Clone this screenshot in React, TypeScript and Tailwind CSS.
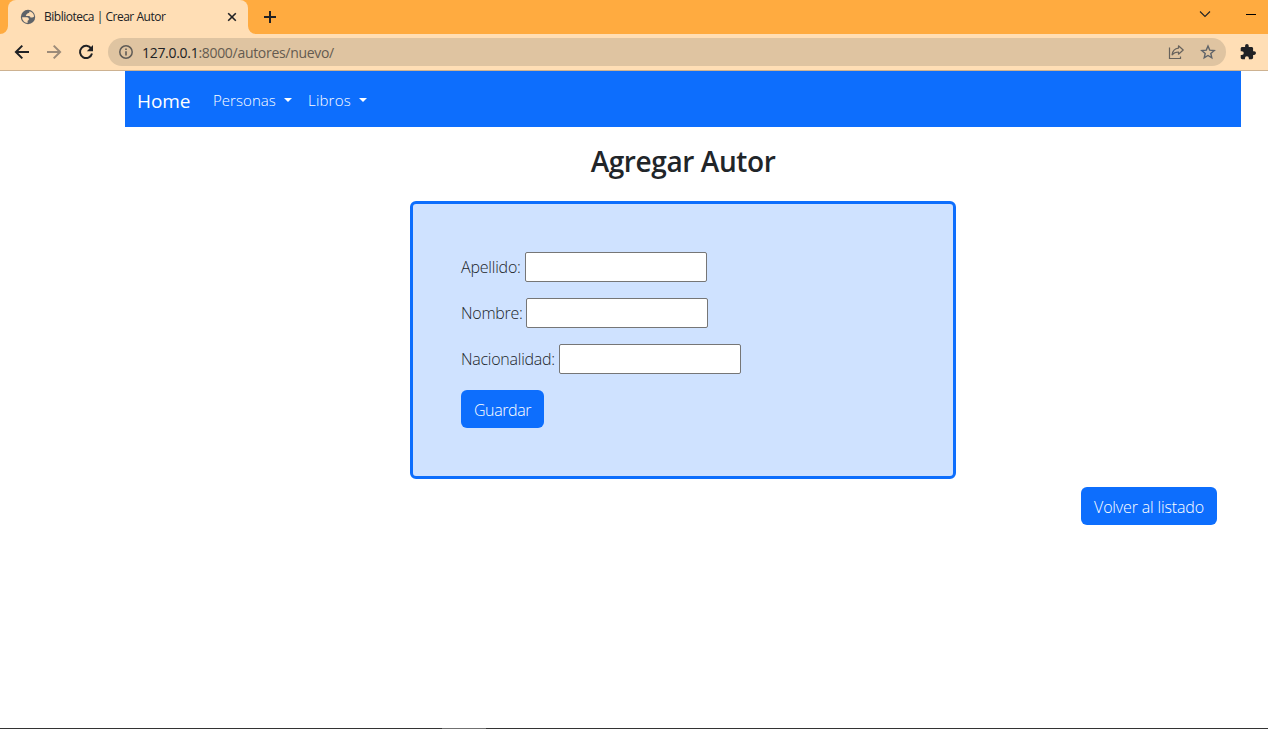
import type { ReactNode } from "react";

function TabStrip() {
  return (
    <div className="flex h-[34px] bg-[#ffab40] pl-2 text-[#202124]">
      <div className="relative flex h-full w-60 items-center rounded-t-lg bg-[#ffdeb5] pl-3 pr-[11px]">
        <svg className="absolute -left-2 bottom-0 size-2" viewBox="0 0 8 8" fill="#ffdeb5">
          <path d="M8 0v8H0a8 8 0 0 0 8-8z" />
        </svg>
        <svg className="absolute -right-2 bottom-0 size-2" viewBox="0 0 8 8" fill="#ffdeb5">
          <path d="M0 0v8h8a8 8 0 0 1-8-8z" />
        </svg>
        <svg className="size-4" viewBox="0 0 16 16">
          <circle cx="8" cy="8" r="7.200" fill="#5f6368" />
          <path
            d="M9.500 2.200c.1 1.300-.5 1.900-1.500 2-1 .1-.8.900-1.500 1.200-.8.300-.9 1.200-.1 1.600h2.500c1 .1 1.500.7 1.500 1.500h1.600c.9 0 1.600-.4 2.100-1.100C13.800 4.800 12 2.700 9.500 2.200zM2.100 8.200c.1 3.100 2.500 5.500 5.500 5.700v-1.700c0-.8.500-1.200 1.200-1.300.3-1.300-.3-2.700-1.800-2.700z"
            fill="#ffdeb5"
          />
        </svg>
        <span className="ml-2 whitespace-nowrap text-[12px] tracking-[-0.48px]">Biblioteca | Crear Autor</span>
        <svg className="ml-auto size-[10px]" viewBox="0 0 10 10" stroke="#202124" strokeWidth="1.600">
          <path d="M1.200 1.200l7.600 7.600M8.800 1.200L1.200 8.800" />
        </svg>
      </div>
      <svg className="ml-4 mt-[11px] size-3" viewBox="0 0 12 12" stroke="#202124" strokeWidth="2">
        <path d="M6 0v12M0 6h12" />
      </svg>
      <svg className="ml-auto mt-[10px] h-2 w-3" viewBox="0 0 12 8" fill="none" stroke="#202124" strokeWidth="1.100">
        <path d="M1 1.500l5 5 5-5" />
      </svg>
      <div className="ml-[35px] mr-3 mt-[14px] h-px w-[10px] bg-black" />
    </div>
  );
}

function Toolbar() {
  return (
    <div className="flex h-[37px] items-center border-b border-[#cdb291] bg-[#ffdeb5] pl-[14px]">
      <svg className="size-4" viewBox="0 0 16 16" fill="none" stroke="#202124" strokeWidth="2">
        <path d="M15 8H2.200M8.300 1.600L1.900 8l6.400 6.400" />
      </svg>
      <svg className="ml-4 size-4" viewBox="0 0 16 16" fill="none" stroke="#9c8b79" strokeWidth="2">
        <path d="M1 8h12.800M7.700 1.600L14.100 8l-6.400 6.400" />
      </svg>
      <svg className="ml-4 size-4" viewBox="0 0 16 16">
        <path d="M13.200 4.600A6.100 6.100 0 1 0 14 9.500" fill="none" stroke="#202124" strokeWidth="2" />
        <path d="M15 1v6.200H8.800z" fill="#202124" />
      </svg>
      <div className="ml-[14px] flex h-7 w-[1118px] items-center rounded-full bg-[#dfc4a1] pl-[11px] pr-[10px]">
        <svg className="size-[14px]" viewBox="0 0 14 14">
          <circle cx="7" cy="7" r="6.200" fill="none" stroke="#5f5b56" strokeWidth="1.500" />
          <path d="M6.200 6.200h1.600v4.300H6.200zM6.200 3.500h1.600v1.600H6.200z" fill="#5f5b56" />
        </svg>
        <span className="ml-[9px] whitespace-nowrap text-[14px] tracking-[-0.3px] text-[#655b50]">
          <span className="text-[#202124]">127.0.0.1</span>:8000/autores/nuevo/
        </span>
        <svg className="ml-auto h-4 w-4" viewBox="0 0 16 16" fill="none" stroke="#67625c" strokeWidth="1.200">
          <path d="M1.500 3.500v11h11v-2" />
          <path d="M10.500 1.800l4.700 4.200-4.700 4.200V8C7.500 8 5.600 8.800 4.100 10.800 4.500 7.400 6.900 4.500 10.500 4.100z" strokeLinejoin="round" />
        </svg>
        <svg className="ml-4 h-4 w-4" viewBox="0 0 16 16" fill="none" stroke="#5f6368" strokeWidth="1.400">
          <path d="M8 2l1.700 4.100 4.500.4-3.400 2.900 1 4.400L8 11.500l-3.800 2.300 1-4.400L1.800 6.500l4.500-.4z" />
        </svg>
      </div>
      <svg className="ml-[14px] size-4" viewBox="1 1 22 22" fill="#202124">
        <path d="M20.500 11H19V7c0-1.100-.9-2-2-2h-4V3.500a2.500 2.500 0 0 0-5 0V5H4c-1.100 0-2 .9-2 2v3.800h1.500a2.700 2.700 0 0 1 0 5.400H2V20c0 1.100.9 2 2 2h3.800v-1.500a2.700 2.700 0 0 1 5.400 0V22H17c1.100 0 2-.9 2-2v-4h1.500a2.500 2.500 0 0 0 0-5z" />
      </svg>
    </div>
  );
}

function MenuItem({ children, className }: { children: ReactNode; className: string }) {
  return (
    <button className={`flex items-center justify-between whitespace-nowrap ${className}`}>
      {children}
      <span className="border-x-[4px] border-t-[4px] border-x-transparent border-t-white" />
    </button>
  );
}

function Field({ label, id, className }: { label: string; id: string; className: string }) {
  return (
    <div className="mb-4 flex h-[30px] items-center">
      <label htmlFor={id} className={`shrink-0 whitespace-nowrap ${className}`}>
        {label}
      </label>
      <input id={id} className="h-[30px] w-[182px] rounded-[2px] border border-[#767676] bg-white px-1" />
    </div>
  );
}

export default function App() {
  return (
    <div className="flex h-[729px] w-[1268px] flex-col overflow-hidden bg-white font-['Open_Sans',sans-serif]">
      <TabStrip />
      <Toolbar />
      <main className="ml-[125px] w-[1116px] grow text-[16px] font-light leading-6 text-[#212529]">
        <nav className="flex h-14 items-center bg-[#0d6efd] pl-3 text-white">
          <a className="w-[76px] pt-1 text-[19px] font-normal tracking-[-0.1px]">Home</a>
          <MenuItem className="w-[79px] pt-0.5 text-[15px] tracking-[0.05px]">Personas</MenuItem>
          <MenuItem className="ml-4 w-[59px] pt-0.5 text-[15px] tracking-[0.2px]">Libros</MenuItem>
        </nav>
        <h1 className="mt-[17px] text-center text-[28px] font-semibold leading-[34px] tracking-[-0.4px]">Agregar Autor</h1>
        <form className="mx-auto mt-[23px] h-[278px] w-[546px] rounded-md border-[3px] border-[#0d6efd] bg-[#cfe2ff] p-12">
          <Field label="Apellido:" id="apellido" className="w-16 tracking-[-0.2px]" />
          <Field label="Nombre:" id="nombre" className="w-[65px] tracking-[-0.25px]" />
          <Field label="Nacionalidad:" id="nacionalidad" className="w-[98px] tracking-[-0.25px]" />
          <button type="button" className="h-[38px] w-[83px] rounded-md bg-[#0d6efd] pt-px tracking-[-0.4px] text-white">
            Guardar
          </button>
        </form>
        <div className="mt-2 flex justify-end pr-6">
          <a className="flex h-[38px] w-[136px] items-center justify-center whitespace-nowrap rounded-md bg-[#0d6efd] pt-px tracking-[-0.15px] text-white">
            Volver al listado
          </a>
        </div>
      </main>
      <div className="h-px bg-[#333333] pl-[442px]">
        <div className="h-px w-11 bg-[#707070]" />
      </div>
    </div>
  );
}
